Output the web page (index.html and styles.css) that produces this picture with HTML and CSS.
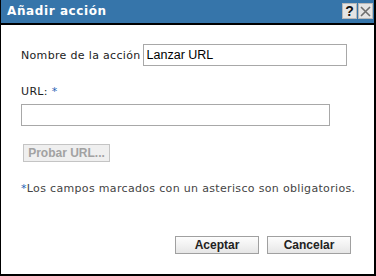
FILE: index.html
```html
<!DOCTYPE html>
<html lang="es">
<head>
  <meta charset="UTF-8" />
  <title>Añadir acción</title>
  <link rel="stylesheet" href="styles.css">
</head>
<body>
  <div class="dialog">
    <div class="titlebar">
      <h1>Añadir acción</h1>
      <div class="title-tools">
        <span class="tool help">?</span>
        <span class="tool close">
          <svg width="11" height="11" viewBox="0 0 11 11"><path d="M1 1L10 10M10 1L1 10" stroke="#6e6e6e" stroke-width="1.6"/></svg>
        </span>
      </div>
    </div>
    <div class="content">
      <div class="row name-row">
        <label for="name">Nombre de la acción</label>
        <input type="text" id="name" value="Lanzar URL">
      </div>
      <div class="field url-field">
        <label for="url">URL: <span class="req">*</span></label>
        <input type="text" id="url">
      </div>
      <button class="btn test" disabled>Probar URL...</button>
      <p class="note"><span class="req">*</span>Los campos marcados con un asterisco son obligatorios.</p>
      <div class="actions">
        <button class="btn">Aceptar</button>
        <button class="btn">Cancelar</button>
      </div>
    </div>
  </div>
</body>
</html>
```

FILE: styles.css
```css
* { box-sizing: border-box; margin: 0; padding: 0; }
body { background: #fff; font-family: 'DejaVu Sans', sans-serif; font-size: 11px; letter-spacing: 0.33px; color: #222; }
.dialog {
  width: 376px; height: 276px;
  border-left: 1px solid #000;
  border-right: 2px solid #000;
  border-bottom: 2px solid #000;
  display: flex; flex-direction: column;
}
.titlebar {
  height: 25px;
  background: #3675aa;
  border-bottom: 2px solid #000;
  display: flex; align-items: center; justify-content: space-between;
  padding: 0 1px 1px 6px;
}
.titlebar h1 { font-size: 12px; font-weight: 700; color: #fff; letter-spacing: 0.6px; }
.title-tools { display: flex; gap: 1px; letter-spacing: 0; }
.tool {
  width: 15px; height: 16px;
  background: #e4e4e4;
  border: 1px solid #b8b8b8;
  display: flex; align-items: center; justify-content: center;
}
.help { font-family: 'Liberation Sans', sans-serif; font-weight: 700; font-size: 14px; color: #111; }
.content { flex: 1; padding: 19px 0 0 20px; display: flex; flex-direction: column; align-items: flex-start; }
.row { display: flex; align-items: center; gap: 2px; }
input {
  height: 22px;
  border: 1px solid #a8a8a8;
  font-family: 'Liberation Sans', sans-serif; font-size: 12.5px; letter-spacing: 0; color: #000;
  padding: 0 3px;
}
.name-row input { width: 204px; }
.field { margin-top: 19px; display: flex; flex-direction: column; gap: 6px; }
.field input { width: 309px; }
.req { color: #1e5fb4; }
.btn {
  height: 18px;
  background: linear-gradient(#fdfdfd, #e6e6e6);
  border: 1px solid #a0a0a0;
  font-family: 'Liberation Sans', sans-serif; font-size: 12px; font-weight: 700; letter-spacing: 0; color: #222;
}
.test { margin-top: 18px; margin-left: 2px; width: 87px; color: #a2a2a2; border-color: #c4c4c4; background: #efefef; }
.note { margin-top: 20px; color: #444; }
.actions { align-self: flex-end; margin-top: 41px; margin-right: 23px; display: flex; gap: 8px; }
.actions .btn { width: 84px; }
```
